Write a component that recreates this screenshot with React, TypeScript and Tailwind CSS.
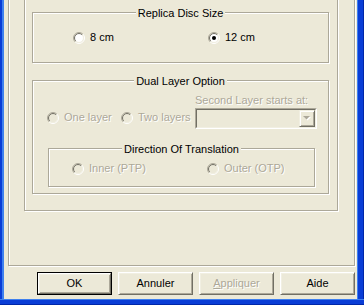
import React from "react";

function RadioDot({ checked, disabled }: { checked?: boolean; disabled?: boolean }) {
  const c = 6;
  const p = (r: number) => {
    const d = r * Math.SQRT1_2;
    return { x1: c + d, y1: c - d, x2: c - d, y2: c + d };
  };
  const o = p(5.5);
  const i = p(4.5);
  return (
    <svg width="12" height="12" viewBox="0 0 12 12" className="shrink-0">
      <circle cx="6" cy="6" r="4.5" fill={disabled ? "#ECE9D8" : "#ffffff"} />
      <path d={`M${o.x1} ${o.y1} A5.5 5.5 0 0 0 ${o.x2} ${o.y2}`} stroke="#ACA899" strokeWidth="1" fill="none" />
      <path d={`M${o.x1} ${o.y1} A5.5 5.5 0 0 1 ${o.x2} ${o.y2}`} stroke="#ffffff" strokeWidth="1" fill="none" />
      <path d={`M${i.x1} ${i.y1} A4.5 4.5 0 0 0 ${i.x2} ${i.y2}`} stroke="#716F64" strokeWidth="1" fill="none" />
      <path d={`M${i.x1} ${i.y1} A4.5 4.5 0 0 1 ${i.x2} ${i.y2}`} stroke="#F1EFE2" strokeWidth="1" fill="none" />
      {checked && <circle cx="6" cy="6" r="2" fill="#000000" />}
    </svg>
  );
}

function Radio({
  label,
  checked,
  disabled,
  className = "",
}: {
  label: string;
  checked?: boolean;
  disabled?: boolean;
  className?: string;
}) {
  return (
    <div className={`flex items-center gap-[5px] ${className}`}>
      <RadioDot checked={checked} disabled={disabled} />
      <span
        className={
          disabled
            ? "whitespace-nowrap text-[#ACA899] [text-shadow:1px_1px_0_#ffffff]"
            : "whitespace-nowrap text-black"
        }
      >
        {label}
      </span>
    </div>
  );
}

function GroupBox({
  title,
  className = "",
  children,
}: {
  title: string;
  className?: string;
  children?: React.ReactNode;
}) {
  return (
    <div
      className={`relative shrink-0 border border-[#ACA899] shadow-[inset_1px_1px_0_#ffffff,1px_1px_0_#ffffff] ${className}`}
    >
      <div className="absolute left-0 right-0 top-[-6px] flex justify-center">
        <span className="bg-[#ECE9D8] px-[2px] leading-[13px] text-black whitespace-nowrap">{title}</span>
      </div>
      {children}
    </div>
  );
}

function Btn({
  children,
  def,
  disabled,
}: {
  children: React.ReactNode;
  def?: boolean;
  disabled?: boolean;
}) {
  const inner = (
    <div className="flex-1 h-full flex items-center justify-center border border-t-white border-l-white border-r-[#716F64] border-b-[#716F64] shadow-[inset_1px_1px_0_#F1EFE2,inset_-1px_-1px_0_#ACA899]">
      <span
        className={
          disabled ? "text-[#ACA899] [text-shadow:1px_1px_0_#ffffff]" : "text-black"
        }
      >
        {children}
      </span>
    </div>
  );
  return def ? (
    <div className="w-[75px] h-[23px] flex border border-black">{inner}</div>
  ) : (
    <div className="w-[75px] h-[23px] flex">{inner}</div>
  );
}

function Combo() {
  return (
    <div className="mt-[1px] h-[21px] flex border border-t-[#ACA899] border-l-[#ACA899] border-r-white border-b-white">
      <div className="flex-1 flex border border-t-[#716F64] border-l-[#716F64] border-r-[#F1EFE2] border-b-[#F1EFE2] bg-[#ECE9D8]">
        <div className="flex-1" />
        <div className="w-[16px] h-full flex items-center justify-center border border-t-[#F1EFE2] border-l-[#F1EFE2] border-r-[#716F64] border-b-[#716F64] shadow-[inset_1px_1px_0_#ffffff,inset_-1px_-1px_0_#ACA899]">
          <svg width="8" height="5" viewBox="0 0 8 5">
            <path d="M1 1h7L4.5 4.5z" fill="#ffffff" />
            <path d="M0 0h7L3.5 3.5z" fill="#ACA899" />
          </svg>
        </div>
      </div>
    </div>
  );
}

export default function App() {
  return (
    <div className="w-[364px] h-[305px] overflow-hidden flex flex-col bg-[#ECE9D8] text-[11px] leading-[13px] font-['Liberation_Sans',Arial,sans-serif]">
      <div className="flex flex-1 min-h-0">
        <div className="w-[4px] flex shrink-0">
          <div className="w-[2px] bg-[#0A3DD6]" />
          <div className="w-[2px] bg-[#3F80EE]" />
        </div>
        <div className="flex-1 min-w-0 flex flex-col">
          <div className="ml-[4px] -mt-[20px] w-[347px] h-[286px] shrink-0 border border-[#ACA899] shadow-[inset_1px_1px_0_#ffffff,1px_1px_0_#ffffff]">
            <div className="ml-[15px] w-[314px] h-[230px] flex flex-col border border-[#ACA899] shadow-[inset_1px_1px_0_#ffffff,1px_1px_0_#ffffff]">
              <GroupBox title="Replica Disc Size" className="ml-[7px] mt-[30px] w-[297px] h-[51px]">
                <div className="flex pt-[18px] pl-[40px]">
                  <Radio label="8 cm" className="w-[135px]" />
                  <Radio label="12 cm" checked />
                </div>
              </GroupBox>
              <GroupBox title="Dual Layer Option" className="ml-[7px] mt-[17px] w-[297px] h-[114px]">
                <div className="flex items-end pt-[13px] pl-[14px]">
                  <Radio label="One layer" disabled className="w-[74px] mb-[5px]" />
                  <Radio label="Two layers" disabled className="w-[74px] mb-[5px]" />
                  <div className="w-[122px] flex flex-col">
                    <span className="whitespace-nowrap text-[#ACA899] [text-shadow:1px_1px_0_#ffffff]">
                      Second Layer starts at:
                    </span>
                    <Combo />
                  </div>
                </div>
                <GroupBox title="Direction Of Translation" className="ml-[15px] mt-[19px] w-[267px] h-[39px]">
                  <div className="flex pt-[13px] pl-[23px]">
                    <Radio label="Inner (PTP)" disabled className="w-[135px]" />
                    <Radio label="Outer (OTP)" disabled />
                  </div>
                </GroupBox>
              </GroupBox>
            </div>
          </div>
          <div className="mt-[6px] flex justify-end gap-[6px] pr-[2px]">
            <Btn def>OK</Btn>
            <Btn>Annuler</Btn>
            <Btn disabled>
              <span className="underline">A</span>ppliquer
            </Btn>
            <Btn>Aide</Btn>
          </div>
        </div>
        <div className="w-[7px] flex shrink-0">
          <div className="w-[1px] bg-[#3F80EE]" />
          <div className="w-[5px] bg-[#0A3DD6]" />
          <div className="w-[1px] bg-[#0026A8]" />
        </div>
      </div>
      <div className="h-[6px] shrink-0 flex flex-col">
        <div className="h-[1px] bg-[#3F80EE]" />
        <div className="h-[4px] bg-[#0A3DD6]" />
        <div className="h-[1px] bg-[#0026A8]" />
      </div>
    </div>
  );
}
